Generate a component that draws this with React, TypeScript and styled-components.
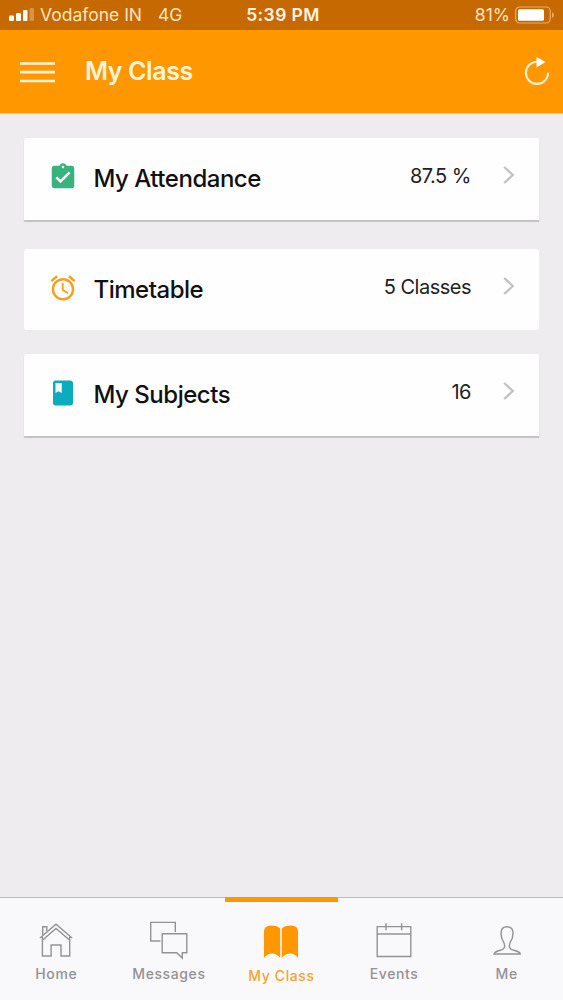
import React from "react";
import styled, { createGlobalStyle } from "styled-components";
import { MdAssignmentTurnedIn, MdAccessAlarm, MdClass } from "react-icons/md";

const GlobalStyle = createGlobalStyle`
  * { box-sizing: border-box; }
  body { margin: 0; background: #eeecef; font-family: Inter, "Liberation Sans", sans-serif; }
`;

const Screen = styled.div`
  display: flex;
  flex-direction: column;
  height: 1000px;
  background: #eeecef;
`;

const StatusBar = styled.div`
  display: grid;
  grid-template-columns: 1fr auto 1fr;
  align-items: center;
  height: 30px;
  padding: 0 9px;
  background: #c66900;
  color: #fde3bd;
  font-size: 17.5px;
  line-height: 30px;
`;

const Carrier = styled.div`
  display: flex;
  align-items: center;
`;

const CarrierName = styled.span`
  margin-left: 6px;
`;

const Network = styled.span`
  margin-left: 16px;
`;

const Clock = styled.span`
  padding-left: 3px;
  color: #fff3e0;
  font-weight: 600;
  letter-spacing: 0.4px;
`;

const Power = styled.div`
  display: flex;
  align-items: center;
  justify-content: flex-end;
  gap: 5px;
`;

const Header = styled.header`
  display: flex;
  align-items: center;
  height: 84px;
  padding: 0 13px 0 20px;
  background: #ff9800;
  border-bottom: 1px solid #fbc97f;
`;

const Title = styled.h1`
  flex: 1;
  margin: 0 0 1px 30px;
  color: #fff3dc;
  font-size: 25px;
  font-weight: 600;
  line-height: 30px;
  letter-spacing: -0.4px;
`;

const Cards = styled.main`
  flex: 1;
  padding: 24px 24px 0;
`;

const Card = styled.section<{ $raised?: boolean }>`
  display: flex;
  align-items: center;
  height: ${(p) => (p.$raised ? 82 : 81)}px;
  margin-bottom: ${(p) => (p.$raised ? 29 : 24)}px;
  padding: 0 24px;
  background: #fefefe;
  border-radius: ${(p) => (p.$raised ? "2px 2px 0 0" : "3px")};
  box-shadow: ${(p) => (p.$raised ? "0 2px 1px #c3c1c4" : "none")};
`;

const CardIcon = styled.span<{ $color: string }>`
  display: flex;
  margin-bottom: 4px;
  color: ${(p) => p.$color};
`;

const CardTitle = styled.h2`
  flex: 1;
  margin: 0 0 0 15.5px;
  color: #111;
  font-size: 24px;
  font-weight: 500;
  line-height: 30px;
  letter-spacing: -0.48px;
`;

const CardValue = styled.span`
  margin: 0 32px 6px 0;
  color: #222;
  font-size: 20px;
  line-height: 24px;
  letter-spacing: -0.5px;
`;

const Chevron = styled.svg`
  display: block;
  margin-bottom: 8px;
`;

const TabBar = styled.nav`
  display: grid;
  grid-template-columns: repeat(5, 1fr);
  height: 103px;
  background: #f9f8fa;
  border-top: 1px solid #bdbbbe;
`;

const Tab = styled.div<{ $active?: boolean }>`
  display: flex;
  flex-direction: column;
  align-items: center;
  margin-top: -1px;
  padding-top: ${(p) => (p.$active ? 21 : 24)}px;
  border-top: ${(p) => (p.$active ? "5px solid #ff9800" : "none")};
  color: ${(p) => (p.$active ? "#f5a52c" : "#949296")};
`;

const TabLabel = styled.span`
  font-size: 14px;
  font-weight: 500;
  line-height: 18px;
  margin-top: 4px;
  letter-spacing: 0.6px;
`;

const TabIcon = ({ children }: { children: React.ReactNode }) => (
  <svg width="42" height="40" viewBox="0 0 42 40" fill="none" stroke="currentColor" strokeWidth="1.4">
    {children}
  </svg>
);

const SignalIcon = () => (
  <svg width="25" height="14" viewBox="0 0 25 14" fill="#fffaf2">
    <rect x="0" y="7.5" width="5" height="5.5" rx="1" />
    <rect x="7" y="5" width="5" height="8" rx="1" />
    <rect x="14" y="2" width="4.5" height="11" rx="1" />
    <rect x="20.5" y="0" width="4.5" height="13" rx="1" opacity=".3" />
  </svg>
);

const BatteryIcon = () => (
  <svg width="39" height="18" viewBox="0 0 39 18">
    <rect x="0.7" y="1" width="34.5" height="16" rx="4" fill="none" stroke="#e5ad6a" strokeWidth="1.2" />
    <rect x="3" y="3.3" width="26" height="11.4" rx="1.5" fill="#fff" />
    <path d="M37 6v6q2-1 2-3t-2-3z" fill="#e5ad6a" />
  </svg>
);

const MenuIcon = () => (
  <svg width="35" height="22" viewBox="0 0 35 22" stroke="#fff3dc" strokeWidth="2.7">
    <path d="M0 2.5h35M0 11.2h35M0 20h35" />
  </svg>
);

const RefreshIcon = () => (
  <svg width="26" height="30" viewBox="0 0 26 30">
    <path d="M13 4.7A11.1 11.1 0 1 0 24.1 15.8" fill="none" stroke="#fff0d0" strokeWidth="2.1" />
    <path d="M12.5 0v10.5l9-5.5z" fill="#fff" />
  </svg>
);

const cards = [
  { title: "My Attendance", value: "87.5 %", icon: MdAssignmentTurnedIn, color: "#36b37e", raised: true },
  { title: "Timetable", value: "5 Classes", icon: MdAccessAlarm, color: "#f9a01b", raised: false },
  { title: "My Subjects", value: "16", icon: MdClass, color: "#0bacc0", raised: true },
];

const tabs = [
  {
    label: "Home",
    icon: (
      <>
        <path d="M5 17 21 3.2 37 17M7.4 15.8V35H16.1V24H26V35H34.7V15.8M7.4 19.3 21 7.5 34.7 19.3" />
        <path d="M7.7 14V5.8H11.8V10.5" />
      </>
    ),
  },
  {
    label: "Messages",
    icon: (
      <>
        <path d="M12.5 20H2.7V1.4H27.3V11" />
        <path d="M14.2 12.8H38.8V31.8H34.3V37L28.8 31.8H14.2z" />
      </>
    ),
  },
  {
    label: "My Class",
    active: true,
    icon: (
      <path
        d="M4 8.5Q4 2.5 11 2.5Q17.5 2.5 20.2 5.5V35Q17 30.5 12 30.5Q7 30.5 4 35zM38 8.5Q38 2.5 31 2.5Q24.5 2.5 21.8 5.5V35Q25 30.5 30 30.5Q35 30.5 38 35z"
        fill="#ff9800"
        stroke="none"
      />
    ),
  },
  {
    label: "Events",
    icon: <path d="M4.2 5.6H37.8V35.5H4.2zM4.2 13H37.8M13 2.3V9.3M28.6 2.3V9.3" />,
  },
  {
    label: "Me",
    icon: (
      <path d="M21 5.7C16.8 5.7 15 8.5 15 12.3C15 16 15.6 18.3 17.6 21C19.2 24.5 18.7 27.3 16.8 28.3C14 29.8 8.5 30 8 33H34.3C33.8 30 28 29.8 25.2 28.3C23.3 27.3 22.8 24.5 24.4 21C26.4 18.3 27 16 27 12.3C27 8.5 25.2 5.7 21 5.7z" />
    ),
  },
];

export default function App() {
  return (
    <Screen>
      <GlobalStyle />
      <StatusBar>
        <Carrier>
          <SignalIcon />
          <CarrierName>Vodafone IN</CarrierName>
          <Network>4G</Network>
        </Carrier>
        <Clock>5:39 PM</Clock>
        <Power>
          <span>81%</span>
          <BatteryIcon />
        </Power>
      </StatusBar>
      <Header>
        <MenuIcon />
        <Title>My Class</Title>
        <RefreshIcon />
      </Header>
      <Cards>
        {cards.map(({ title, value, icon: Icon, color, raised }) => (
          <Card key={title} $raised={raised}>
            <CardIcon $color={color}>
              <Icon size={30} />
            </CardIcon>
            <CardTitle>{title}</CardTitle>
            <CardValue>{value}</CardValue>
            <Chevron width="12" height="20" viewBox="0 0 12 20" fill="none" stroke="#c2c1c3" strokeWidth="2.3">
              <path d="M1.2 2 9.8 10 1.2 18" />
            </Chevron>
          </Card>
        ))}
      </Cards>
      <TabBar>
        {tabs.map(({ label, icon, active }) => (
          <Tab key={label} $active={active}>
            <TabIcon>{icon}</TabIcon>
            <TabLabel>{label}</TabLabel>
          </Tab>
        ))}
      </TabBar>
    </Screen>
  );
}
